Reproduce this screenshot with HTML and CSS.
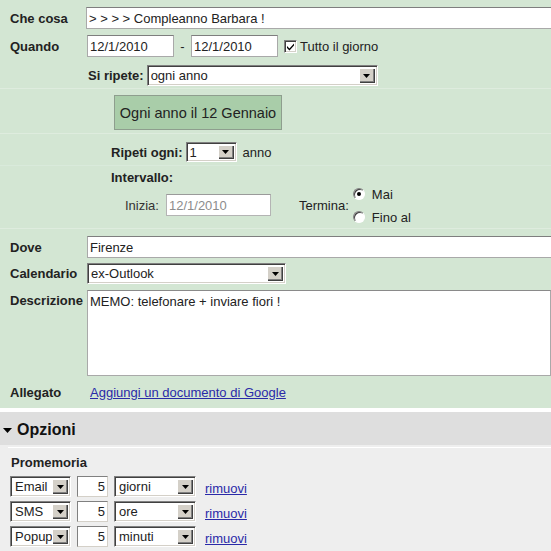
FILE: index.html
```html
<!DOCTYPE html>
<html>
<head>
<meta charset="utf-8">
<link rel="stylesheet" href="styles.css">
</head>
<body>
<div class="edit">
  <div class="row r1">
    <div class="lbl">Che cosa</div>
    <div class="field wide">&gt; &gt; &gt; &gt; Compleanno Barbara !</div>
  </div>
  <div class="row r2">
    <div class="lbl">Quando</div>
    <div class="field date">12/1/2010</div>
    <span class="dash">-</span>
    <div class="field date">12/1/2010</div>
    <span class="chk"><svg width="9" height="9" viewBox="0 0 9 9"><path d="M1 4 L3.5 6.5 L8 1.5 L8 3.5 L3.5 8.5 L1 6 Z" fill="#000"/></svg></span>
    <span class="chktxt">Tutto il giorno</span>
  </div>
  <div class="row r3">
    <span class="sublbl">Si ripete:</span>
    <div class="sel s-rep"><span class="txt">ogni anno</span><span class="btn"><svg width="7" height="4" viewBox="0 0 7 4"><path d="M0 0H7L3.5 4Z" fill="#000"/></svg></span></div>
  </div>
  <div class="sep s1"></div>
  <div class="row rbtn">
    <div class="sumbtn">Ogni anno il 12 Gennaio</div>
  </div>
  <div class="sep s2"></div>
  <div class="row rrip">
    <span class="sublbl">Ripeti ogni:</span>
    <div class="sel s-num"><span class="txt">1</span><span class="btn"><svg width="7" height="4" viewBox="0 0 7 4"><path d="M0 0H7L3.5 4Z" fill="#000"/></svg></span></div>
    <span class="unit">anno</span>
  </div>
  <div class="sep s3"></div>
  <div class="row rint">
    <span class="sublbl">Intervallo:</span>
  </div>
  <div class="row rini">
    <span class="ini">Inizia:</span>
    <div class="field dis">12/1/2010</div>
    <span class="term">Termina:</span>
    <div class="radios">
      <div class="ropt o1"><span class="radio on"></span><span>Mai</span></div>
      <div class="ropt o2"><span class="radio"></span><span>Fino al</span></div>
    </div>
  </div>
  <div class="sep s4"></div>
  <div class="row rdove">
    <div class="lbl">Dove</div>
    <div class="field wide">Firenze</div>
  </div>
  <div class="row rcal">
    <div class="lbl">Calendario</div>
    <div class="sel s-cal"><span class="txt">ex-Outlook</span><span class="btn"><svg width="7" height="4" viewBox="0 0 7 4"><path d="M0 0H7L3.5 4Z" fill="#000"/></svg></span></div>
  </div>
  <div class="row rdesc">
    <div class="lbl">Descrizione</div>
    <div class="area">MEMO: telefonare + inviare fiori !</div>
  </div>
  <div class="row rall">
    <div class="lbl">Allegato</div>
    <a class="link addl" href="#">Aggiungi un documento di Google</a>
  </div>
</div>
<div class="gap"></div>
<div class="opthead"><svg class="tri" width="9" height="5" viewBox="0 0 9 5"><path d="M0 0H9L4.5 5Z" fill="#000"/></svg><span>Opzioni</span></div>
<div class="optbody">
  <div class="wline"></div>
  <div class="promo">Promemoria</div>
  <div class="rem">
    <div class="sel s-type"><span class="txt">Email</span><span class="btn"><svg width="7" height="4" viewBox="0 0 7 4"><path d="M0 0H7L3.5 4Z" fill="#000"/></svg></span></div>
    <div class="field num">5</div>
    <div class="sel s-unit"><span class="txt">giorni</span><span class="btn"><svg width="7" height="4" viewBox="0 0 7 4"><path d="M0 0H7L3.5 4Z" fill="#000"/></svg></span></div>
    <a class="link" href="#">rimuovi</a>
  </div>
  <div class="rem">
    <div class="sel s-type"><span class="txt">SMS</span><span class="btn"><svg width="7" height="4" viewBox="0 0 7 4"><path d="M0 0H7L3.5 4Z" fill="#000"/></svg></span></div>
    <div class="field num">5</div>
    <div class="sel s-unit"><span class="txt">ore</span><span class="btn"><svg width="7" height="4" viewBox="0 0 7 4"><path d="M0 0H7L3.5 4Z" fill="#000"/></svg></span></div>
    <a class="link" href="#">rimuovi</a>
  </div>
  <div class="rem">
    <div class="sel s-type"><span class="txt">Popup</span><span class="btn"><svg width="7" height="4" viewBox="0 0 7 4"><path d="M0 0H7L3.5 4Z" fill="#000"/></svg></span></div>
    <div class="field num">5</div>
    <div class="sel s-unit"><span class="txt">minuti</span><span class="btn"><svg width="7" height="4" viewBox="0 0 7 4"><path d="M0 0H7L3.5 4Z" fill="#000"/></svg></span></div>
    <a class="link" href="#">rimuovi</a>
  </div>
</div>
</body>
</html>
```

FILE: styles.css
```css
html, body {
  margin: 0;
  padding: 0;
}
body {
  width: 551px;
  height: 551px;
  overflow: hidden;
  font-family: "Liberation Sans", Arial, sans-serif;
  font-size: 13px;
  color: #222;
  background: #eeeeee;
}
.edit {
  background: #d3e6d3;
  height: 408px;
  padding-top: 7px;
  box-sizing: border-box;
  overflow: hidden;
}
.row {
  display: flex;
  align-items: center;
  white-space: nowrap;
}
.lbl {
  width: 86px;
  flex: none;
  padding-left: 10px;
  box-sizing: border-box;
  font-weight: bold;
}
.field {
  background: #fff;
  border: 1px solid #a9a9a9;
  border-top-color: #7e7e7e;
  box-sizing: border-box;
  height: 22px;
  padding: 0 2px;
  display: flex;
  align-items: center;
  white-space: nowrap;
  flex: none;
}
.wide { width: 480px; }
.r1 { height: 22px; margin-bottom: 6px; }
.r2 { height: 22px; margin-bottom: 8px; }
.r2 .lbl { width: 87px; }
.date { width: 87px; }
.dash { width: 17px; text-align: center; }
.chk {
  width: 13px;
  height: 13px;
  box-sizing: border-box;
  margin-left: 6px;
  margin-right: 3px;
  background: #fff;
  border-top: 1px solid #808080;
  border-left: 1px solid #808080;
  border-right: 1px solid #fff;
  border-bottom: 1px solid #fff;
  box-shadow: inset 1px 1px 0 #404040, inset -1px -1px 0 #d4d0c8;
  display: flex;
  align-items: center;
  justify-content: center;
}
.sublbl { font-weight: bold; margin-right: 2px; }
.r3 { height: 21px; padding-left: 88px; }
.r3 .sublbl { margin-right: 3px; }
.sel {
  background: #fff;
  box-sizing: border-box;
  height: 21px;
  border-top: 1px solid #808080;
  border-left: 1px solid #808080;
  border-right: 1px solid #fff;
  border-bottom: 1px solid #fff;
  box-shadow: inset 1px 1px 0 #404040, inset -1px -1px 0 #d4d0c8;
  display: flex;
  align-items: center;
  padding: 2px;
  flex: none;
}
.sel .txt { flex: 1; padding-left: 1px; overflow: hidden; }
.sel .btn {
  width: 16px;
  height: 15px;
  flex: none;
  background: #d4d0c8;
  box-shadow: inset 1px 1px 0 #fff, inset -1px -1px 0 #404040, inset -2px -2px 0 #808080;
  display: flex;
  align-items: center;
  justify-content: center;
}
.s-rep { width: 231px; }
.sep { height: 1px; background: #deecde; }
.s1 { margin-top: 2px; }
.rbtn { margin-top: 6px; height: 35px; padding-left: 114px; }
.sumbtn {
  width: 168px;
  height: 35px;
  box-sizing: border-box;
  background: #a9cda9;
  border: 1px solid #8e9e8e;
  font-size: 14.5px;
  color: #222;
  display: flex;
  align-items: center;
  justify-content: center;
}
.s2 { margin-top: 3px; }
.rrip { margin-top: 8px; height: 20px; padding-left: 111px; }
.rrip .sublbl { margin-right: 3px; }
.s-num { width: 51px; height: 20px; }
.s-num .btn { height: 14px; }
.unit { margin-left: 6px; }
.s3 { margin-top: 3px; background: #d9eadb; }
.rint { margin-top: 3px; height: 16px; padding-left: 111px; }
.rini { margin-top: 2px; height: 36px; padding-left: 125px; }
.ini { color: #333; margin-right: 7px; }
.dis { width: 105px; color: #8c8c8c; border-color: #b4b4b4; border-top-color: #9a9a9a; }
.term { color: #222; margin-left: 28px; margin-right: 4px; }
.radios { display: flex; flex-direction: column; }
.ropt { display: flex; align-items: center; height: 18px; }
.o1 { margin-bottom: 5px; }
.ropt span:last-child { margin-left: 7px; position: relative; top: 1px; }
.radio {
  width: 12px;
  height: 12px;
  box-sizing: border-box;
  border-radius: 50%;
  background: #fff;
  border: 1px solid;
  border-color: #808080 #ffffff #ffffff #808080;
  box-shadow: inset 1px 1px 0 #404040;
  display: flex;
  align-items: center;
  justify-content: center;
}
.radio.on::after {
  content: "";
  width: 4px;
  height: 4px;
  border-radius: 50%;
  background: #000;
}
.s4 { margin-top: 5px; }
.rdove { margin-top: 7px; height: 22px; }
.rdove .lbl { width: 87px; }
.rcal { margin-top: 5px; height: 21px; }
.rcal .lbl { width: 87px; }
.s-cal { width: 199px; }
.rdesc { margin-top: 6px; height: 86px; align-items: flex-start; }
.rdesc .lbl { width: 87px; padding-top: 3px; }
.area {
  width: 480px;
  height: 86px;
  box-sizing: border-box;
  background: #fff;
  border: 1px solid #a9a9a9;
  border-top-color: #8a8a8a;
  padding: 3px 2px;
}
.rall { margin-top: 8px; height: 16px; }
.rall .lbl { width: 90px; }
.link { color: #2a2aa8; text-decoration: underline; }
.gap { height: 4px; background: #fff; }
.opthead {
  height: 33px;
  box-sizing: border-box;
  padding-top: 2px;
  background: #dedede;
  display: flex;
  align-items: center;
  padding-left: 3px;
  font-weight: bold;
  font-size: 16px;
  color: #111;
}
.opthead .tri { margin-right: 5px; margin-top: 1px; }
.optbody { padding-top: 2px; height: 110px; }
.wline { height: 1px; margin-left: 8px; background: #fff; }
.promo { font-weight: bold; padding-left: 11px; margin-top: 7px; height: 16px; line-height: 16px; }
.rem {
  display: flex;
  align-items: center;
  height: 21px;
  padding-left: 10px;
  margin-top: 4px;
}
.promo + .rem { margin-top: 5px; }
.rem .link { position: relative; top: 2px; }
.s-type { width: 61px; margin-right: 6px; }
.s-type .txt { padding-left: 2px; }
.num { width: 31px; height: 21px; justify-content: flex-end; padding-right: 2px; margin-right: 6px; border-color: #808080 #d4d0c8 #d4d0c8 #808080; }
.s-unit { width: 82px; margin-right: 9px; }
.s-unit .txt { padding-left: 2px; }
```
